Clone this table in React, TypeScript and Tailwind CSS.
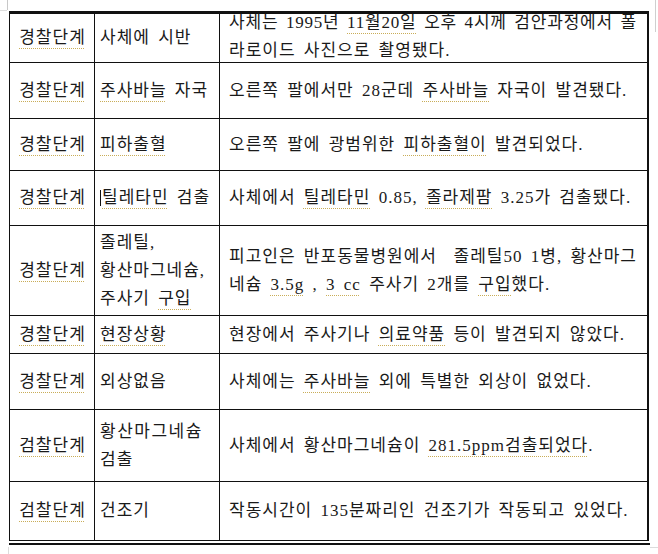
import type { ReactNode } from "react";

// 맞춤법 검사 밑줄
function U({ children }: { children: ReactNode }) {
  return (
    <span className="underline decoration-dotted decoration-[#c9ad58] decoration-1 underline-offset-[5px]">
      {children}
    </span>
  );
}

interface Row {
  h: string;
  stage: string;
  subject: ReactNode;
  detail: ReactNode;
}

const rows: Row[] = [
  {
    h: "h-[49px]",
    stage: "경찰단계",
    subject: <div>사체에 시반</div>,
    detail: (
      <div className="-mt-[2px]">
        <div className="whitespace-nowrap text-justify tracking-[0.8px] [word-spacing:0px] [text-align-last:justify]">
          사체는 1995년 <U>11월20일</U> 오후 4시께 검안과정에서 폴
        </div>
        <div>라로이드 사진으로 촬영됐다.</div>
      </div>
    ),
  },
  {
    h: "h-[56px]",
    stage: "경찰단계",
    subject: (
      <div>
        <U>주사바늘</U> 자국
      </div>
    ),
    detail: (
      <div>
        오른쪽 팔에서만 28군데 <U>주사바늘</U> 자국이 발견됐다.
      </div>
    ),
  },
  {
    h: "h-[52px]",
    stage: "경찰단계",
    subject: (
      <div>
        <U>피하출혈</U>
      </div>
    ),
    detail: (
      <div>
        오른쪽 팔에 광범위한 <U>피하출혈이</U> 발견되었다.
      </div>
    ),
  },
  {
    h: "h-[55px]",
    stage: "경찰단계",
    subject: (
      <div className="flex items-center">
        <span className="mr-[1px] inline-block h-[16px] w-[1px] bg-[#111]" />
        <span>
          <U>틸레타민</U> 검출
        </span>
      </div>
    ),
    detail: (
      <div>
        사체에서 <U>틸레타민</U> 0.85, <U>졸라제팜</U> 3.25가 검출됐다.
      </div>
    ),
  },
  {
    h: "h-[90px]",
    stage: "경찰단계",
    subject: (
      <div>
        <div>졸레틸,</div>
        <div>황산마그네슘,</div>
        <div>
          주사기 <U>구입</U>
        </div>
      </div>
    ),
    detail: (
      <div>
        <div className="whitespace-nowrap text-justify [word-spacing:0px] [text-align-last:justify]">
          피고인은 반포동물병원에서 &nbsp;졸레틸50 1병, 황산마그
        </div>
        <div>
          네슘 <U>3.5g</U> , <U>3 cc</U> 주사기 2개를 <U>구입</U>했다.
        </div>
      </div>
    ),
  },
  {
    h: "h-[38px]",
    stage: "경찰단계",
    subject: (
      <div>
        <U>현장상황</U>
      </div>
    ),
    detail: (
      <div>
        현장에서 주사기나 <U>의료약품</U> 등이 발견되지 않았다.
      </div>
    ),
  },
  {
    h: "h-[56px]",
    stage: "경찰단계",
    subject: <div>외상없음</div>,
    detail: (
      <div>
        사체에는 <U>주사바늘</U> 외에 특별한 외상이 없었다.
      </div>
    ),
  },
  {
    h: "h-[72px]",
    stage: "검찰단계",
    subject: (
      <div>
        <div className="tracking-[1.5px]">황산마그네슘</div>
        <div>검출</div>
      </div>
    ),
    detail: (
      <div>
        사체에서 황산마그네슘이 <U>281.5ppm검출되었다</U>.
      </div>
    ),
  },
  {
    h: "h-[59px]",
    stage: "검찰단계",
    subject: <div>건조기</div>,
    detail: <div>작동시간이 135분짜리인 건조기가 작동되고 있었다.</div>,
  },
];

export default function App() {
  return (
    <div className="relative h-[554px] w-[658px] overflow-hidden bg-white text-[17px] leading-[28px] tracking-[1px] text-[#1a1a1a] [word-spacing:3px] font-['Liberation_Serif','Noto_Sans_CJK_KR',serif]">
      {/* 편집 용지 모서리 표시 */}
      <div className="absolute left-[7px] top-0 h-[10px] w-[1px] bg-[#c8c8c8]" />
      <div className="absolute left-0 top-[10px] h-[1px] w-[7px] bg-[#dcdcdc]" />
      <div className="absolute left-[655px] top-0 h-[32px] w-[1px] bg-[#cfcfcf]" />
      <div className="absolute left-[8px] top-[547px] h-[7px] w-[1px] bg-[#dcdcdc]" />
      <div className="absolute left-[650px] top-[547px] h-[1px] w-[8px] bg-[#dcdcdc]" />

      <div className="pl-[9px] pt-[11px]">
        <div className="w-[640px] border-l border-r-2 border-t-[3px] border-[#111]">
          {rows.map((row, i) => (
            <div key={i} className={`flex border-b border-[#111] ${row.h}`}>
              <div className="flex w-[85px] shrink-0 items-center justify-center border-r border-[#111] pl-[1px]">
                <U>{row.stage}</U>
              </div>
              <div className="flex w-[125px] shrink-0 items-center border-r border-[#111] pl-[5px]">
                {row.subject}
              </div>
              <div className="flex min-w-0 flex-1 items-center pl-[9px] pr-[10px]">
                <div className="w-full">{row.detail}</div>
              </div>
            </div>
          ))}
        </div>
        <div className="mt-[2px] h-[2px] w-[641px] bg-[#111]" />
      </div>
    </div>
  );
}
